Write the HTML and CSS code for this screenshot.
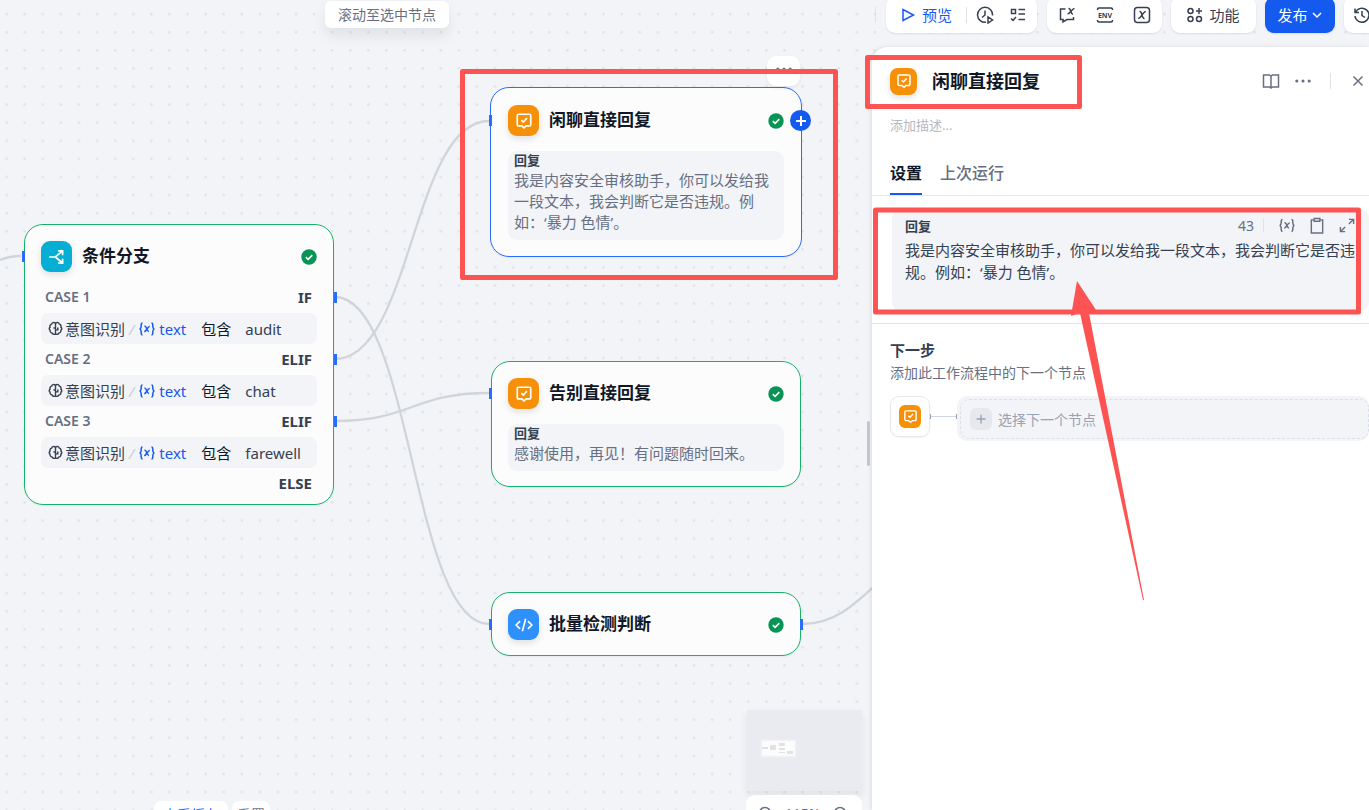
FILE: index.html
```html
<!DOCTYPE html>
<html lang="zh-CN">
<head>
  <meta charset="UTF-8" />
  <title>工作流</title>
  <link rel="stylesheet" href="styles.css">
</head>
<body>

  <!-- icons -->
  <svg class="sprite" aria-hidden="true">
    <symbol id="i-answer" viewBox="0 0 16 16"><path d="M3.2 2h9.600a1.200 1.200 0 0 1 1.200 1.200v8a1.200 1.200 0 0 1-1.200 1.200H10L8 14.200l-2-1.800H3.200A1.200 1.200 0 0 1 2 11.200V3.200A1.200 1.200 0 0 1 3.200 2z"/><path d="M5.600 7.200l1.800 1.700 3.200-3.500"/></symbol>
    <symbol id="i-check" viewBox="0 0 16 16"><circle cx="8" cy="8" r="7.700" fill="#079455"/><path d="M4.800 8.200l2.300 2.200 4.200-4.300" fill="none" stroke="#fff" stroke-width="1.600"/></symbol>
    <symbol id="i-branch" viewBox="0 0 16 16"><path d="M1 8h5.500l6-5M6.500 8l6 5M9 2.500h4v4M9 13.500h4v-4"/></symbol>
    <symbol id="i-code" viewBox="0 0 16 16"><path d="M4.500 4.500L1 8l3.500 3.500M11.500 4.500L15 8l-3.500 3.500M9.500 2.500l-3 11"/></symbol>
    <symbol id="i-brain" viewBox="0 0 16 16"><path d="M8 2v12M8 2.200C6 1 4.200 1.900 3.900 3.300 2.300 3.800 1.700 5.200 2.200 6.500 1 7.500 1 9 2.200 9.800 2 11.500 3 12.700 4.300 12.800 5 14.400 7 14.600 8 13.800M8 2.200c2-1.200 3.800-.3 4.100 1.100 1.600.5 2.200 1.900 1.700 3.200 1.200 1 1.200 2.500 0 3.300.2 1.700-.8 2.900-2.100 3-.7 1.600-2.700 1.800-3.700 1M5.800 7.500H8M8 9.500h2.500V7"/></symbol>
    <symbol id="i-var" viewBox="0 0 18 16"><path d="M4.500 2C2.500 2 3.500 5 3 6.500 2.700 7.500 2 8 1.500 8 2 8 2.700 8.500 3 9.500 3.500 11 2.500 14 4.500 14M13.500 2c2 0 1 3 1.500 4.500.3 1 1 1.500 1.500 1.500-.5 0-1.200.5-1.500 1.500-.5 1.500.5 4.500-1.500 4.500M6.500 5.500C8.500 4.500 8.800 10.500 11 10.500M11.800 5.500C9.500 5 8.500 11 6.200 10.500"/></symbol>
    <symbol id="i-dots" viewBox="0 0 16 16"><circle cx="2.500" cy="8" r="1.400"/><circle cx="8" cy="8" r="1.400"/><circle cx="13.500" cy="8" r="1.400"/></symbol>
    <symbol id="i-plus" viewBox="0 0 16 16"><path d="M8 3v10M3 8h10"/></symbol>
  </svg>

  <main class="workflow">
    <svg class="edges" aria-hidden="true">
      <defs>
        <pattern id="grid" x="-2.400" y="5.200" width="18.090" height="18.090" patternUnits="userSpaceOnUse">
          <circle cx="9" cy="9" r="1.300" fill="#dfe2e7"/>
        </pattern>
      </defs>
      <rect width="100%" height="100%" fill="url(#grid)"/>
      <g fill="none" stroke="#d0d5dc" stroke-width="2.300">
        <path d="M0 260C7 257 14 256 21 256"/>
        <path d="M335 297C412 297 412 624 489 624"/>
        <path d="M335 359C412 359 412 121 489 121"/>
        <path d="M335 421C412 421 412 393 489 393"/>
        <path d="M803 624C835 624 855 604 880 581"/>
      </g>
    </svg>

    <button class="locate">滚动至选中节点</button>

    <section class="node node-if">
      <i class="port port-in"></i>
      <header class="node-head">
        <span class="badge cyan"><svg><use href="#i-branch"/></svg></span>
        <h3>条件分支</h3>
        <svg class="ok"><use href="#i-check"/></svg>
      </header>
      <div class="case"><span>CASE 1</span><b>IF</b><i class="port port-out"></i></div>
      <div class="cond"><svg class="brain"><use href="#i-brain"/></svg><span>意图识别</span><em>/</em><svg class="var"><use href="#i-var"/></svg><span class="blue">text</span><span class="op">包含</span><span class="val">audit</span></div>
      <div class="case"><span>CASE 2</span><b>ELIF</b><i class="port port-out"></i></div>
      <div class="cond"><svg class="brain"><use href="#i-brain"/></svg><span>意图识别</span><em>/</em><svg class="var"><use href="#i-var"/></svg><span class="blue">text</span><span class="op">包含</span><span class="val">chat</span></div>
      <div class="case"><span>CASE 3</span><b>ELIF</b><i class="port port-out"></i></div>
      <div class="cond"><svg class="brain"><use href="#i-brain"/></svg><span>意图识别</span><em>/</em><svg class="var"><use href="#i-var"/></svg><span class="blue">text</span><span class="op">包含</span><span class="val">farewell</span></div>
      <div class="case"><span></span><b>ELSE</b></div>
    </section>

    <section class="node node-chat selected">
      <i class="port port-in"></i>
      <button class="node-more" aria-label="更多"><svg><use href="#i-dots"/></svg></button>
      <header class="node-head">
        <span class="badge orange"><svg><use href="#i-answer"/></svg></span>
        <h3>闲聊直接回复</h3>
        <svg class="ok"><use href="#i-check"/></svg>
      </header>
      <button class="node-add" aria-label="添加节点"><svg><use href="#i-plus"/></svg></button>
      <div class="reply"><h4>回复</h4><p>我是内容安全审核助手，你可以发给我一段文本，我会判断它是否违规。例如：‘暴力 色情’。</p></div>
    </section>

    <section class="node node-bye">
      <i class="port port-in"></i>
      <header class="node-head">
        <span class="badge orange"><svg><use href="#i-answer"/></svg></span>
        <h3>告别直接回复</h3>
        <svg class="ok"><use href="#i-check"/></svg>
      </header>
      <div class="reply"><h4>回复</h4><p>感谢使用，再见！有问题随时回来。</p></div>
    </section>

    <section class="node node-batch">
      <i class="port port-in"></i>
      <i class="port port-end"></i>
      <header class="node-head">
        <span class="badge azure"><svg><use href="#i-code"/></svg></span>
        <h3>批量检测判断</h3>
        <svg class="ok"><use href="#i-check"/></svg>
      </header>
    </section>

    <div class="bottom-tags">
      <button class="blue">查看缓存</button>
      <button>重置</button>
    </div>

    <div class="map-tools">
      <svg class="minimap" viewBox="0 0 115 81" aria-hidden="true">
        <rect width="115" height="81" fill="#e9ebf0"/>
        <rect x="14.500" y="30.500" width="34" height="16" fill="#fcfcfd" stroke="#f2f3f6"/>
        <path d="M15 37h6v2h-6zM23 35h6v5h-6zM32 33h6v3h-6zM32 38h6v2h-6zM32 42h6v1h-6zM40 41h6v3h-6z" fill="#e2e2e2"/>
      </svg>
      <div class="zoom-bar">
        <button aria-label="缩小"><svg viewBox="0 0 16 16"><circle cx="8" cy="7" r="5.500"/><path d="M5.500 7h5"/></svg></button>
        <span>115%</span>
        <button aria-label="放大"><svg viewBox="0 0 16 16"><circle cx="8" cy="7" r="5.500"/><path d="M5.500 7h5M8 4.500v5"/></svg></button>
      </div>
    </div>

    <aside class="side">
      <div class="toolbar">
        <i class="split"></i>
        <div class="group run-group">
          <button class="blue"><svg viewBox="0 0 16 16"><path d="M3 2.500v11L13.500 8z"/></svg><span>预览</span></button>
          <i class="split"></i>
          <button aria-label="运行历史"><svg class="lg" viewBox="0 0 18 18"><path d="M10 16.300A7.500 7.500 0 1 1 16.500 9.500M9 4.500V9l-3 2.500M12 11v6l4.500-3z"/></svg></button>
          <button aria-label="检查清单"><svg viewBox="0 0 16 16"><path d="M1.500 2.500h4v4h-4zM8.500 2.500H15M8.500 7H15M8.500 12.500H15M1 11.500l2 2 3-3.500"/></svg></button>
        </div>
        <div class="group env-group">
          <button aria-label="会话变量"><svg class="lg" viewBox="0 0 18 18"><path d="M7.500 3H2.500v10.500H5V16l4-2.500h6.500V11M10.500 2.500c2.800-.5 1.700 6 4.500 5.500M16.500 2.500c-2.500 0-4.500 5.500-7 5.500"/></svg></button>
          <button aria-label="环境变量"><svg class="lg" viewBox="0 0 18 18"><path d="M1.500 4V3.500A1.500 1.500 0 0 1 3 2h12a1.500 1.500 0 0 1 1.500 1.500V4M1.500 14v.5A1.500 1.500 0 0 0 3 16h12a1.500 1.500 0 0 0 1.500-1.500V14"/><text class="env" x="9" y="12" text-anchor="middle">ENV</text></svg></button>
          <button aria-label="系统变量"><svg class="lg" viewBox="0 0 18 18"><rect x="1.500" y="1.500" width="15" height="15" rx="3"/><path d="M6.500 5.500c3.200-.7 1.800 7.500 5 7M12.800 5.500c-2.600 0-5 7-7.600 7"/></svg></button>
        </div>
        <button class="tool"><svg viewBox="0 0 16 16"><circle cx="3.500" cy="4" r="2.500"/><circle cx="3.500" cy="12" r="2.500"/><circle cx="12" cy="12" r="2.500"/><path d="M12 1v6M9 4h6"/></svg><span>功能</span></button>
        <button class="publish"><span>发布</span><svg viewBox="0 0 12 12"><path d="M2 4l4 4 4-4"/></svg></button>
        <button class="tool history" aria-label="版本历史"><svg class="lg" viewBox="0 0 18 18"><path d="M2 2.500v4h4M2.500 6.500a7 7 0 1 1-.5 3.500M9 5v4.500l3 2"/></svg></button>
      </div>

      <div class="panel">
        <i class="resize"></i>
        <div class="panel-head">
          <span class="badge orange small"><svg><use href="#i-answer"/></svg></span>
          <input class="title" aria-label="节点名称" value="闲聊直接回复">
          <button aria-label="帮助文档"><svg viewBox="0 0 18 18"><path d="M9 3v13M1.500 3h6L9 4l1.500-1h6v12h-6L9 16l-1.500-1h-6z"/></svg></button>
          <button class="fill" aria-label="更多操作"><svg viewBox="0 0 16 16"><use href="#i-dots"/></svg></button>
          <i class="split"></i>
          <button aria-label="关闭"><svg viewBox="0 0 18 18"><path d="M4.500 4.500l9 9M13.500 4.500l-9 9"/></svg></button>
        </div>
        <input class="desc" aria-label="描述" placeholder="添加描述...">
        <nav class="tabs">
          <a class="active" href="#settings">设置</a>
          <a href="#last-run">上次运行</a>
        </nav>

        <div class="editor">
          <div class="editor-head">
            <label for="answer">回复</label>
            <span>43</span>
            <i class="split"></i>
            <button aria-label="插入变量"><svg viewBox="0 0 18 16"><use href="#i-var"/></svg></button>
            <button aria-label="复制"><svg viewBox="0 0 18 18"><path d="M6 3H3v14h12V3h-3M6 1.500h6v3H6z"/></svg></button>
            <button aria-label="展开"><svg viewBox="0 0 18 18"><path d="M11 2.500h5v5M16 2.500l-5 5M7 15.500H2v-5M2 15.500l5-5"/></svg></button>
          </div>
          <textarea id="answer" rows="3">我是内容安全审核助手，你可以发给我一段文本，我会判断它是否违规。例如：‘暴力 色情’。</textarea>
        </div>

        <div class="next">
          <h4>下一步</h4>
          <p>添加此工作流程中的下一个节点</p>
          <div class="next-row">
            <span class="next-icon"><span class="badge orange tiny"><svg><use href="#i-answer"/></svg></span></span>
            <i class="link"></i>
            <div class="next-box"><button><span><svg><use href="#i-plus"/></svg></span>选择下一个节点</button></div>
          </div>
        </div>
      </div>
    </aside>

    <!-- red marks on top of everything -->
    <svg class="marks" aria-hidden="true">
      <g fill="none" stroke="#fd5353" stroke-width="5" stroke-linejoin="round">
        <rect x="462.500" y="71.500" width="373" height="206"/>
        <rect x="867.500" y="57.500" width="212" height="49"/>
        <rect x="875.500" y="210" width="483" height="102"/>
      </g>
      <path d="M1077 281l19 29-7 3 55 287h-1l-63-287-9 3z" fill="#fd5353"/>
    </svg>
  </main>

</body>
</html>
```

FILE: styles.css
```css
* {
    box-sizing: border-box;
}
body {
    margin: 0;
    font-family: "Noto Sans", "Noto Sans CJK SC", sans-serif;
    font-size: 15px;
    color: #354052;
}
h3, h4, p {
    margin: 0;
}
button {
    display: flex;
    align-items: center;
    justify-content: center;
    padding: 0;
    border: 0;
    background: none;
    font: inherit;
    color: inherit;
    white-space: nowrap;
}
svg {
    flex: none;
    fill: none;
    stroke: currentColor;
    stroke-width: 1.5;
}
.sprite {
    position: absolute;
    width: 0;
    height: 0;
}
.blue {
    color: #155aef;
}
.workflow {
    position: relative;
    display: flex;
    justify-content: flex-end;
    height: 100vh;
    overflow: hidden;
    background: #f2f4f7;
}
.edges, .marks {
    position: absolute;
    top: 0;
    left: 0;
    width: 100%;
    height: 100%;
    stroke: none;
}
.marks {
    z-index: 5;
    pointer-events: none;
}
.locate {
    position: absolute;
    left: 325px;
    top: 1px;
    height: 27px;
    padding: 0 13px 2px;
    border-radius: 6px;
    background: #fff;
    font-size: 14px;
    color: #676f83;
    box-shadow: 0 8px 14px rgba(16,24,40,0.08);
}

/* nodes */
.node {
    position: absolute;
    width: 310px;
    padding: 16px 16px 15px;
    border: 1px solid #17b26a;
    border-radius: 19px;
    background: #fcfcfd;
    box-shadow: 0 1px 2px rgba(16,24,40,0.05);
}
.node-if {
    left: 24px;
    top: 224px;
    padding-bottom: 5px;
}
.node-chat {
    left: 490px;
    top: 87px;
}
.node-bye {
    left: 491px;
    top: 361px;
}
.node-batch {
    left: 491px;
    top: 592px;
}
.selected {
    width: 312px;
    padding: 17px 17px 16px;
    border-color: #296dff;
}
.node-head {
    display: flex;
    align-items: center;
    gap: 10px;
    height: 31px;
}
.node-head h3 {
    flex: 1;
    padding-bottom: 2px;
    font-size: 17px;
    line-height: 24px;
    color: #101828;
}
.badge {
    display: flex;
    align-items: center;
    justify-content: center;
    width: 31px;
    height: 31px;
    border-radius: 9px;
    color: #fff;
    box-shadow: 0 3px 6px rgba(16,24,40,0.12);
}
.badge svg {
    width: 18px;
    height: 18px;
}
.orange {
    background: #f79009;
}
.cyan {
    background: #06aed4;
}
.azure {
    background: #2e90fa;
}
.small {
    width: 27px;
    height: 27px;
    border-radius: 8px;
}
.small svg {
    width: 16px;
    height: 16px;
}
.tiny {
    width: 22px;
    height: 23px;
    border-radius: 6px;
    box-shadow: none;
}
.tiny svg {
    width: 15px;
    height: 15px;
}
.ok {
    width: 16px;
    height: 16px;
    stroke: none;
}
.port {
    position: absolute;
    width: 3px;
    height: 11px;
    background: #296dff;
}
.port-in {
    left: -3px;
    top: 26px;
}
.selected .port-in {
    left: -2px;
    top: 27px;
}
.port-out {
    right: -20px;
    top: 10px;
}
.port-end {
    right: -3px;
    top: 26px;
}
.node-more {
    position: absolute;
    right: 1px;
    top: -32px;
    width: 33px;
    height: 30px;
    padding-bottom: 4px;
    border-radius: 9px;
    background: #fff;
    color: #676f83;
    box-shadow: 0 2px 4px rgba(16,24,40,0.06);
}
.node-more svg {
    width: 18px;
    height: 18px;
    fill: currentColor;
    stroke: none;
}
.node-add {
    position: absolute;
    right: -10px;
    top: 22px;
    width: 21px;
    height: 21px;
    border-radius: 50%;
    background: #155aef;
    color: #fff;
}
.node-add svg {
    width: 16px;
    height: 16px;
    stroke-width: 2;
}
.case {
    position: relative;
    display: flex;
    align-items: center;
    justify-content: space-between;
    height: 31px;
    padding: 0 5px 2px 4px;
    color: #354052;
}
.node-head + .case {
    margin-top: 10px;
}
.case span {
    font-size: 14px;
    font-weight: 600;
    color: #676f83;
}
.case b {
    font-size: 15px;
    font-weight: bold;
}
.cond {
    display: flex;
    align-items: center;
    height: 31px;
    padding: 0 7px;
    border-radius: 7px;
    background: #f2f4f7;
}
.cond em {
    margin: 0 4px;
    color: #c8ceda;
}
.brain {
    width: 15px;
    height: 15px;
    margin-right: 2px;
}
.var {
    width: 18px;
    height: 16px;
    margin-right: 3px;
    color: #155aef;
}
.op {
    margin: 0 14px 0 15px;
    color: #101828;
}
.reply {
    margin-top: 15px;
    padding: 0 7px 7px 6px;
    border-radius: 9px;
    background: #f2f4f7;
}
.reply h4 {
    font-size: 13px;
    line-height: 19px;
    color: #354052;
}
.reply p {
    line-height: 21px;
    color: #676f83;
}

/* bottom */
.bottom-tags {
    position: absolute;
    left: 154px;
    bottom: -17px;
    display: flex;
    gap: 4px;
}
.bottom-tags button {
    height: 26px;
    padding: 0 9px;
    border-radius: 7px;
    background: #fff;
    font-size: 14px;
}
.bottom-tags button + button {
    padding: 0 5px;
    color: #676f83;
}
.map-tools {
    position: absolute;
    left: 746px;
    bottom: -22px;
    width: 116px;
}
.minimap {
    display: block;
    width: 115px;
    height: 81px;
    margin: 0 0 4px 1px;
    stroke: none;
    box-shadow: 0 4px 8px rgba(16,24,40,0.08);
}
.zoom-bar {
    display: flex;
    align-items: center;
    justify-content: space-between;
    height: 37px;
    padding: 0 14px 0 11px;
    border-radius: 9px;
    background: #fff;
    font-size: 14px;
    color: #676f83;
}
.zoom-bar svg {
    width: 16px;
    height: 22px;
}

/* right side */
.side {
    position: relative;
    display: flex;
    flex-direction: column;
    width: 497px;
}
.split {
    flex: none;
    width: 1px;
    height: 16px;
    background: #dfe2e8;
}
.toolbar {
    display: flex;
    align-items: center;
    height: 47px;
    padding: 0 0 17px 3px;
    overflow: hidden;
}
.toolbar span {
    padding-bottom: 2px;
}
.toolbar svg {
    width: 16px;
    height: 16px;
}
.toolbar .lg {
    width: 18px;
    height: 18px;
}
.env {
    font-size: 7px;
    font-weight: bold;
    fill: currentColor;
    stroke: none;
}
.group, .tool, .publish {
    display: flex;
    flex: none;
    align-items: center;
    height: 36px;
    border-radius: 9px;
    background: #fff;
    box-shadow: 0 1px 2px rgba(16,24,40,0.1);
}
.run-group {
    width: 151px;
    margin-left: 10px;
    padding-left: 14px;
}
.run-group button:first-child {
    gap: 6px;
    margin-right: 14px;
}
.run-group .split + button {
    margin: 0 16px 0 9px;
}
.env-group {
    width: 115px;
    margin-left: 10px;
    padding: 0 11px;
    justify-content: space-between;
}
.tool {
    width: 85px;
    margin-left: 9px;
    gap: 6px;
}
.publish {
    width: 70px;
    margin-left: 9px;
    gap: 3px;
    background: #155aef;
    color: #fff;
}
.publish svg {
    width: 12px;
    height: 12px;
}
.history {
    width: 36px;
}
.panel {
    position: relative;
    flex: 1;
    padding-top: 17px;
    border-top-left-radius: 16px;
    background: #fff;
    box-shadow: -1px 0 4px rgba(16,24,40,0.1);
}
.resize {
    position: absolute;
    left: -5px;
    top: 374px;
    width: 3px;
    height: 45px;
    border-radius: 2px;
    background: #c0c5cf;
}
.panel-head {
    display: flex;
    align-items: center;
    height: 34px;
    padding: 0 2px 0 18px;
}
.panel-head svg {
    width: 18px;
    height: 18px;
}
.panel-head .badge svg {
    width: 16px;
    height: 16px;
}
.panel-head button {
    margin-left: 14px;
    color: #676f83;
}
.panel-head .split {
    margin-left: 18px;
}
.panel-head .split + button {
    margin-left: 18px;
}
.fill svg {
    fill: currentColor;
    stroke: none;
}
.title {
    flex: 1;
    min-width: 0;
    height: 28px;
    margin-left: 15px;
    padding: 0 0 2px;
    border: 0;
    font: bold 18px "Noto Sans", "Noto Sans CJK SC", sans-serif;
    color: #101828;
}
.desc {
    display: block;
    width: 300px;
    height: 20px;
    margin: 17px 18px 0;
    padding: 0;
    border: 0;
    font: 13px "Noto Sans", "Noto Sans CJK SC", sans-serif;
}
.desc::placeholder {
    color: #b4b8c2;
}
.tabs {
    display: flex;
    gap: 18px;
    height: 61px;
    padding: 24px 18px 0;
    border-bottom: 1px solid #e6e8ec;
}
.tabs a {
    height: 36px;
    border-bottom: 2px solid transparent;
    font-size: 16px;
    font-weight: 500;
    line-height: 29px;
    text-decoration: none;
    color: #676f83;
}
.tabs .active {
    border-color: #155aef;
    font-weight: bold;
    color: #101828;
}
.editor {
    margin: 13px 0 12px 20px;
    padding: 5px 0 1px 13px;
    border-radius: 9px;
    background: #f2f4f7;
}
.editor-head {
    display: flex;
    align-items: center;
    height: 22px;
    padding-right: 13px;
    font-size: 14px;
    color: #676f83;
}
.editor-head label {
    flex: 1;
    font-size: 13px;
    font-weight: bold;
    color: #354052;
}
.editor-head .split {
    height: 14px;
    margin: 0 2px 0 9px;
}
.editor-head button {
    margin-left: 12px;
}
.editor-head svg {
    width: 18px;
    height: 17px;
}
.editor textarea {
    display: block;
    width: 100%;
    height: 74px;
    padding: 3px 0 0;
    border: 0;
    resize: none;
    overflow: hidden;
    background: none;
    font: 15px/22px "Noto Sans", "Noto Sans CJK SC", sans-serif;
    color: #354052;
}
.next {
    padding: 14px 0 0 18px;
    border-top: 1px solid #e1e4e9;
}
.next h4 {
    font-size: 15px;
    line-height: 24px;
}
.next p {
    font-size: 14px;
    line-height: 22px;
    color: #676f83;
}
.next-row {
    display: flex;
    margin-top: 12px;
}
.next-icon {
    display: flex;
    align-items: center;
    justify-content: center;
    width: 40px;
    height: 41px;
    border: 1px solid #e6e8ec;
    border-radius: 9px;
    box-shadow: 0 1px 2px rgba(16,24,40,0.05);
}
.link {
    align-self: flex-start;
    width: 27px;
    height: 5px;
    margin-top: 18px;
    border: solid #98a2b2;
    border-width: 0 1px;
    background: linear-gradient(#d0d5dc, #d0d5dc) center / 100% 1px no-repeat;
}
.next-box {
    flex: 1;
    padding: 3px 0 2px 3px;
    border-radius: 10px;
    background: #f2f4f7;
}
.next-box button {
    justify-content: flex-start;
    width: 100%;
    height: 40px;
    padding-left: 9px;
    gap: 6px;
    border: 1px dashed #dcdfe5;
    border-radius: 9px;
    font-size: 14px;
    color: #98a2b2;
}
.next-box span {
    display: flex;
    align-items: center;
    justify-content: center;
    width: 22px;
    height: 22px;
    border-radius: 6px;
    background: #e6e8ed;
}
.next-box svg {
    width: 14px;
    height: 14px;
}
```
